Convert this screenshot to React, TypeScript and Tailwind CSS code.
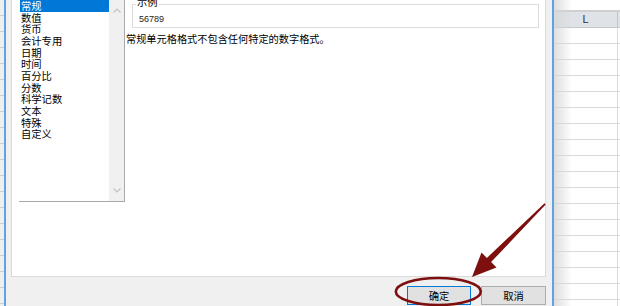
import React from 'react';

const CATEGORIES = ['常规', '数值', '货币', '会计专用', '日期', '时间', '百分比', '分数', '科学记数', '文本', '特殊', '自定义'];

const FONT = { fontFamily: '"Noto Sans CJK SC", "Noto Sans", sans-serif' };

function CategoryList() {
  return (
    <div className="flex w-[106px] h-[202px] border-r border-b border-[#a9a9a9] bg-white">
      <div className="flex flex-col flex-1 pl-px">
        {CATEGORIES.map((name, i) => (
          <div
            key={name}
            className={`h-[11.67px] leading-[11.67px] text-[10.3px] pl-px whitespace-nowrap ${
              i === 0 ? 'bg-[#0078d7] text-white' : 'text-black'
            }`}
          >
            {name}
          </div>
        ))}
      </div>
      {/* Scrollbar */}
      <div className="w-[15px] bg-[#f0f0f0] flex flex-col justify-between items-center py-[8px]">
        <svg width="8" height="5" viewBox="0 0 8 5">
          <path d="M0.5 4.5 L4 1 L7.5 4.5" fill="none" stroke="#c2c2c2" strokeWidth="1.2" />
        </svg>
        <svg width="8" height="5" viewBox="0 0 8 5">
          <path d="M0.5 0.5 L4 4 L7.5 0.5" fill="none" stroke="#c2c2c2" strokeWidth="1.2" />
        </svg>
      </div>
    </div>
  );
}

function SampleArea() {
  return (
    <div className="flex flex-col flex-1 pl-[1px] pr-[6px]">
      <div className="relative ml-[6px] mt-[4px] h-[24px] border border-[#dcdcdc] bg-white">
        <span className="absolute left-[3px] top-[-9px] bg-white px-px text-[10.3px] leading-[12px] text-black">示例</span>
        <span
          className="absolute left-[6px] top-[9px] text-[9px] leading-[10px] text-[#222]"
          style={{ fontFamily: '"Liberation Sans", Arial, sans-serif' }}
        >
          56789
        </span>
      </div>
      <div className="mt-[5px] text-[10.2px] leading-[12px] text-black whitespace-nowrap">
        常规单元格格式不包含任何特定的数字格式。
      </div>
    </div>
  );
}

function Sheet() {
  return (
    <div className="relative flex flex-col w-[66px] h-[306px] bg-white">
      <div className="h-[10px] bg-white" />
      <div className="h-[2px] bg-[#cfcfcf]" />
      <div className="flex h-[16px] border-b border-[#c8c8c8] bg-[#dfe2e6]">
        <div className="w-[64px] border-r border-[#c5c5c5] flex items-center justify-center text-[11px] text-[#333]" style={{ fontFamily: '"Liberation Sans", Arial, sans-serif' }}>
          L
        </div>
      </div>
      <div className="flex-1 bg-[repeating-linear-gradient(to_bottom,#ffffff_0px,#ffffff_15px,#dadada_15px,#dadada_16px)] border-r-0">
        <div className="w-[64px] h-full border-r border-[#dadada]" />
      </div>
      <div className="absolute left-0 top-0 bottom-0 w-[18px] bg-gradient-to-r from-[#d6d6d6]/80 to-transparent" />
    </div>
  );
}

export default function App() {
  return (
    <div className="relative flex w-[620px] h-[306px] overflow-hidden bg-white" style={FONT}>
      {/* spreadsheet slice on the left */}
      <div className="w-[4px] h-full bg-[repeating-linear-gradient(to_bottom,#efefef_0px,#efefef_15px,#cfcfcf_15px,#cfcfcf_16px)]" />

      {/* dialog */}
      <div className="flex flex-col w-[550px] h-full border-x-2 border-[#5da3e6] bg-[#f0f0f0]">
        <div className="flex h-[277px] ml-[5px] mr-[6px] bg-white border-x border-b border-[#dadada]">
          <div className="pl-[7px]">
            <CategoryList />
          </div>
          <SampleArea />
        </div>
        <div className="flex justify-end items-start gap-[10px] pt-[9px] pr-[6px]">
          <button className="w-[64px] h-[19px] border border-[#0078d7] bg-[#e1e1e1] text-[10.3px] leading-[17px] text-black">
            确定
          </button>
          <button className="w-[65px] h-[19px] border border-[#adadad] bg-[#e1e1e1] text-[10.3px] leading-[17px] text-black">
            取消
          </button>
        </div>
      </div>

      <Sheet />

      {/* annotation overlay */}
      <svg className="absolute left-0 top-0 pointer-events-none" width="620" height="306" viewBox="0 0 620 306">
        <ellipse cx="438.3" cy="291.5" rx="42.5" ry="13.5" fill="none" stroke="#7d0f0f" strokeWidth="2.6" />
        <polygon
          points="544.5,203.3 486.9,257.9 481.5,252.5 472,277 496.5,267.5 491.1,262.1 545.7,204.5"
          fill="#7d0f0f"
        />
      </svg>
    </div>
  );
}
